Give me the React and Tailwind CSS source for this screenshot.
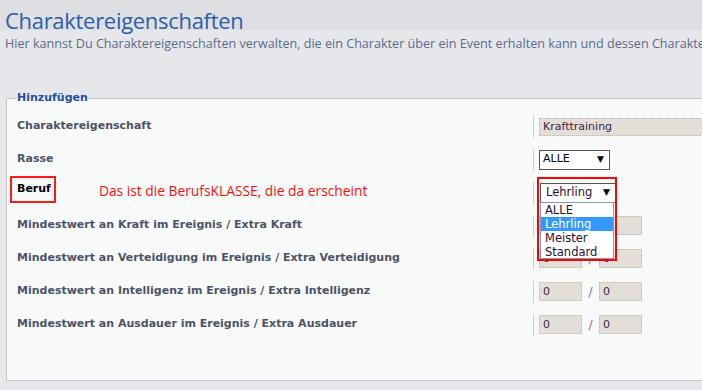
import React from "react";

const labelCls = "flex-1 text-[11px] font-bold text-[#4b5466]";

function Sep() {
  return <div className="w-px h-[22px] bg-[#cfcfcf] mr-[5px]" />;
}

function NumInput() {
  return (
    <div className="w-[43px] h-[19px] bg-[#e3dfd8] border border-dotted border-[#bdb7ad] text-[11px] text-[#3a2540] pl-[3px] leading-[17px]">0</div>
  );
}

function Row({ label, children }) {
  return (
    <div className="flex items-center h-[33px]">
      <div className={labelCls}>{label}</div>
      <Sep />
      <div className="w-[168px] flex items-center">{children}</div>
    </div>
  );
}

function Pair() {
  return (
    <div className="flex items-center">
      <NumInput />
      <span className="w-[17px] text-center text-[12px] text-[#6a7a9a]">/</span>
      <NumInput />
    </div>
  );
}

export default function App() {
  return (
    <div
      className="w-[702px] h-[390px] overflow-hidden bg-[#e6e7ea] relative"
      style={{ fontFamily: '"DejaVu Sans", Verdana, sans-serif' }}
    >
      <div className="h-[30px] bg-[#dedfe3] pl-[5px] pt-[8px]">
        <div
          className="text-[22px] leading-[24px] tracking-[-0.3px] text-[#2d5ea8] whitespace-nowrap"
          style={{ fontFamily: '"Open Sans", sans-serif' }}
        >
          Charaktereigenschaften
        </div>
      </div>
      <div
        className="mt-[7px] pl-[5px] text-[12.6px] leading-[14px] text-[#5b6a8c] whitespace-nowrap"
        style={{ fontFamily: '"Open Sans", sans-serif' }}
      >
        Hier kannst Du Charaktereigenschaften verwalten, die ein Charakter über ein Event erhalten kann und dessen Charakter
      </div>
      <fieldset className="ml-[6px] mt-[40px] w-[720px] h-[290px] border border-[#c8c8c8] bg-[#f8f9f9] px-[10px] relative">
        <legend className="text-[11px] font-bold text-[#1f4f9e] leading-[14px] px-0">Hinzufügen</legend>
        <div className="pt-[5px] w-[690px]">
          <Row label="Charaktereigenschaft">
            <div className="w-[200px] h-[18px] bg-[#e3dfd8] border border-dotted border-[#bdb7ad] text-[11px] text-[#3a2540] pl-[3px] leading-[16px] shrink-0">Krafttraining</div>
          </Row>
          <Row label="Rasse">
            <div className="w-[71px] h-[20px] bg-white border border-[#555] flex items-center justify-between pl-[3px] pr-[5px] text-[11px] text-black">
              <span>ALLE</span>
              <span className="text-[9px]">▼</span>
            </div>
          </Row>
          <Row
            label={
              <div className="flex items-center mb-[6px]">
                <span className="inline-block border-2 border-[#ff1a1a] pl-[5px] pr-[3px] py-[3px] -ml-[7px] text-black">Beruf</span>
                <span
                  className="ml-[43px] mt-[3px] text-[13.8px] font-normal leading-[18px] text-[#ff1010] whitespace-nowrap"
                  style={{ fontFamily: '"Open Sans", sans-serif' }}
                >
                  Das ist die BerufsKLASSE, die da erscheint
                </span>
              </div>
            }
          >
            <div className="w-[76px] h-[20px] bg-white border border-[#555] flex items-center justify-between pl-[5px] pr-[5px] text-[11.5px] text-[#2a1030] ml-[1px]">
              <span>Lehrling</span>
              <span className="text-[9px] text-black">▼</span>
            </div>
          </Row>
          <Row label="Mindestwert an Kraft im Ereignis / Extra Kraft"><Pair /></Row>
          <Row label="Mindestwert an Verteidigung im Ereignis / Extra Verteidigung"><Pair /></Row>
          <Row label="Mindestwert an Intelligenz im Ereignis / Extra Intelligenz"><Pair /></Row>
          <Row label="Mindestwert an Ausdauer im Ereignis / Extra Ausdauer"><Pair /></Row>
        </div>
      </fieldset>
      <div className="absolute left-[537px] top-[177px] w-[80px] h-[84px] border-2 border-[#ff0000]">
        <div className="absolute left-[1px] top-[23px] w-[74px] h-[57px] bg-white border border-[#7f9db9] text-[11.5px] text-[#2a1030] leading-[14px]">
          <div className="pl-[4px]">ALLE</div>
          <div className="pl-[4px] bg-[#3399ff] text-white">Lehrling</div>
          <div className="pl-[4px]">Meister</div>
          <div className="pl-[4px]">Standard</div>
        </div>
      </div>
    </div>
  );
}
